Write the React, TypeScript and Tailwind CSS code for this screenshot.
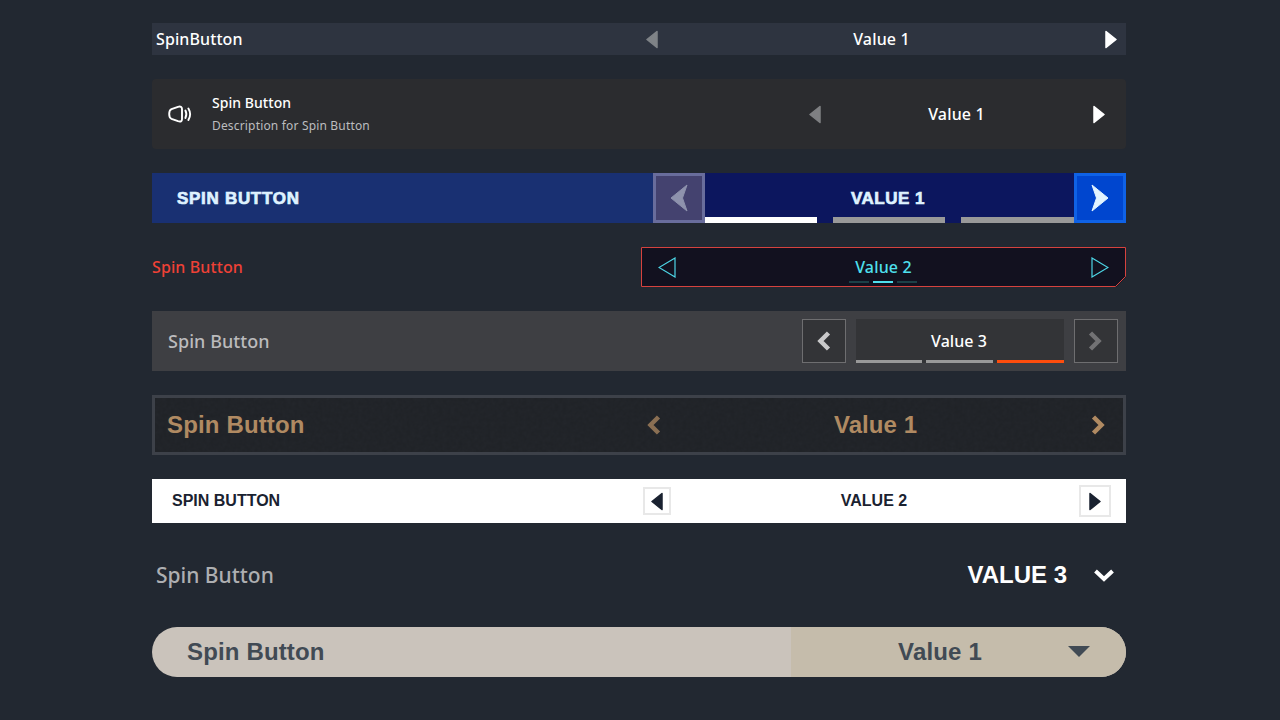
import React from "react";

const Tri = ({ dir, w, h, className }: { dir: "l" | "r"; w: number; h: number; className?: string }) => (
  <svg width={w} height={h} viewBox="0 0 12 18" className={className} aria-hidden>
    <polygon
      points={dir === "l" ? "11,1 1,9 11,17" : "1,1 11,9 1,17"}
      fill="currentColor"
      stroke="currentColor"
      strokeWidth="1.5"
      strokeLinejoin="round"
    />
  </svg>
);

const Chev = ({ dir, className }: { dir: "l" | "r"; className?: string }) => (
  <svg width="14" height="22" viewBox="0 0 14 22" className={className} aria-hidden>
    <polyline
      points={dir === "l" ? "11.5,3 3.5,11 11.5,19" : "2.5,3 10.5,11 2.5,19"}
      fill="none"
      stroke="currentColor"
      strokeWidth="4.5"
    />
  </svg>
);

const Dart = ({ dir }: { dir: "l" | "r" }) => (
  <svg width="18" height="28" viewBox="0 0 18 28" aria-hidden>
    <polygon
      points={dir === "l" ? "1,14 17,1 12.5,14 17,27" : "17,14 1,1 5.5,14 1,27"}
      fill="currentColor"
      stroke="currentColor"
      strokeWidth="1"
      strokeLinejoin="round"
    />
  </svg>
);

const Speaker = () => (
  <svg width="24" height="18" viewBox="168 105 24 18" fill="none" stroke="white" strokeWidth="1.9" strokeLinejoin="round" strokeLinecap="round" aria-hidden>
    <path d="M171.5 109.2 L178 106.8 Q182 105.8 182 109 L182 119 Q182 122.5 178 121.2 L171.5 118.8 Q169.2 117.8 169.2 114 Q169.2 110.2 171.5 109.2 Z" />
    <path d="M185.4 110.5 C186.6 112.8 186.6 115.7 185.4 118" />
    <path d="M188.4 108.5 C190.5 112 190.5 116.5 188.4 120" />
  </svg>
);

export default function App() {
  return (
    <div className="min-h-[720px] bg-[#222831] pt-[23px] [font-family:'Noto_Sans',sans-serif]">
      <div className="ml-[152px] flex w-[974px] flex-col gap-6">
        {/* 1 */}
        <div className="flex h-8 items-center justify-between bg-[#2e3440] pl-1 text-white">
          <span className="text-base font-medium tracking-[0.1px]">SpinButton</span>
          <div className="flex w-[490px] items-center justify-between pl-[10px] pr-[9px]">
            <Tri dir="l" w={12} h={19} className="text-[#7f8387]" />
            <span className="text-base font-medium tracking-[0.15px]">Value 1</span>
            <Tri dir="r" w={12} h={19} className="text-white" />
          </div>
        </div>

        {/* 2 */}
        <div className="flex h-[70px] items-center justify-between rounded bg-[#2b2c2f] pl-4 pr-[21px] text-white">
          <div className="flex items-center gap-5">
            <Speaker />
            <div className="mt-[-1px] flex flex-col gap-[4px]">
              <span className="text-sm leading-5 font-medium tracking-[0.05px]">Spin Button</span>
              <span className="text-xs leading-[18px] tracking-[0.17px] text-[#bcbdbf]">Description for Spin Button</span>
            </div>
          </div>
          <div className="flex w-[296px] items-center justify-between">
            <Tri dir="l" w={12} h={19} className="text-[#7f8083]" />
            <span className="mr-[1px] text-base font-medium tracking-[0.15px]">Value 1</span>
            <Tri dir="r" w={12} h={19} className="text-white" />
          </div>
        </div>

        {/* 3 */}
        <div className="flex h-[50px] items-stretch bg-[#193072] pl-[25px] font-['Liberation_Sans',sans-serif] text-[#dff2ff]">
          <span className="flex flex-1 items-center pt-[1px] text-[17px] font-bold tracking-[0.7px] [-webkit-text-stroke:0.7px_#dff2ff]">SPIN BUTTON</span>
          <button className="flex w-[52px] items-center justify-center border-[3px] border-[#696d9c] bg-[#44426f] text-[#8e92ad]">
            <Dart dir="l" />
          </button>
          <div className="relative flex w-[369px] items-center justify-center bg-[#0c165e] pr-[3px] pt-[1px] text-[17px] font-bold tracking-[0.5px] [-webkit-text-stroke:0.7px_#dff2ff]">
            VALUE 1
            <div className="absolute inset-x-0 bottom-0 flex justify-between">
              <span className="h-[6px] w-28 bg-white" />
              <span className="h-[6px] w-28 bg-[#999999]" />
              <span className="h-[6px] w-[113px] bg-[#999999]" />
            </div>
          </div>
          <button className="flex w-[52px] items-center justify-center border-[3px] border-[#0f62e6] bg-[#0046cf] text-[#e2f4ff]">
            <Dart dir="r" />
          </button>
        </div>

        {/* 4 */}
        <div className="flex h-10 items-center justify-between">
          <span className="text-base font-medium tracking-[0.1px] text-[#ef4136]">Spin Button</span>
          <div className="relative flex h-10 w-[485px] items-center justify-between bg-[#12111f] px-[17px] [clip-path:polygon(0_0,100%_0,100%_30px,475px_100%,0_100%)]">
            <svg width="485" height="40" className="absolute left-0 top-0" aria-hidden>
              <polygon points="0.5,0.5 484.5,0.5 484.5,29.5 474.5,39.5 0.5,39.5" fill="none" stroke="#d6423e" />
            </svg>
            <svg width="18" height="21" viewBox="0 0 18 21" className="text-[#4dd6e6]" aria-hidden>
              <polygon points="17,1 1,10.5 17,20" fill="none" stroke="currentColor" strokeWidth="1.2" />
            </svg>
            <span className="mb-[1px] text-base font-medium tracking-[0.15px] text-[#4fe0ee]">Value 2</span>
            <svg width="18" height="21" viewBox="0 0 18 21" className="text-[#4dd6e6]" aria-hidden>
              <polygon points="1,1 17,10.5 1,20" fill="none" stroke="currentColor" strokeWidth="1.2" />
            </svg>
            <div className="absolute bottom-[4px] left-[208px] flex gap-1">
              <span className="h-[2px] w-5 bg-[#1c4047]" />
              <span className="h-[2px] w-5 bg-[#4fe0ee]" />
              <span className="h-[2px] w-5 bg-[#1c4047]" />
            </div>
          </div>
        </div>

        {/* 5 */}
        <div className="flex h-[60px] items-center justify-between bg-[#3e3f43] pl-4 pr-2">
          <span className="text-lg font-medium tracking-[0.05px] text-[#bbbbbd]">Spin Button</span>
          <div className="flex items-center gap-[10px]">
            <button className="flex size-11 items-center justify-center border border-[#6e6e70] bg-[#333437] text-[#c9c9ca]">
              <Chev dir="l" />
            </button>
            <div className="relative flex h-11 w-52 items-center justify-center bg-[#333437] pr-[2px] text-base font-medium tracking-[0.05px] text-white">
              Value 3
              <div className="absolute inset-x-0 bottom-0 flex gap-1">
                <span className="h-[3px] w-[66px] bg-[#999999]" />
                <span className="h-[3px] w-[67px] bg-[#999999]" />
                <span className="h-[3px] w-[67px] bg-[#ff4d0d]" />
              </div>
            </div>
            <button className="flex size-11 items-center justify-center border border-[#6e6e70] bg-[#333437] pr-[2px] text-[#727274]">
              <Chev dir="r" />
            </button>
          </div>
        </div>

        {/* 6 */}
        <div className="relative flex h-[60px] items-center justify-between border-[3px] border-[#3d4149] bg-[#23262b] pl-3 pr-[18px] font-['Liberation_Sans',sans-serif] text-[#b08a62]">
          <svg className="absolute inset-0 size-full opacity-15" aria-hidden>
            <filter id="grain">
              <feTurbulence type="fractalNoise" baseFrequency="0.25" numOctaves="4" seed="4" />
              <feColorMatrix values="0 0 0 0 0  0 0 0 0 0  0 0 0 0 0  0.9 0 0 0 -0.15" />
            </filter>
            <rect width="100%" height="100%" filter="url(#grain)" />
          </svg>
          <span className="relative text-2xl font-bold tracking-[0.15px]">Spin Button</span>
          <div className="relative flex w-[458px] items-center justify-between">
            <Chev dir="l" className="text-[#8a6f53]" />
            <span className="mr-[1px] text-2xl font-bold tracking-[0.05px]">Value 1</span>
            <Chev dir="r" />
          </div>
        </div>

        {/* 7 */}
        <div className="flex h-11 items-center justify-between bg-white pl-5 pr-[15px] font-['Liberation_Sans',sans-serif] text-base font-bold text-[#1a2230]">
          <span>SPIN BUTTON</span>
          <div className="flex w-[468px] items-center justify-between">
            <button className="flex size-7 items-center justify-center border-2 border-[#e8e8e8]">
              <Tri dir="l" w={12} h={19} />
            </button>
            <span className="mr-[2px]">VALUE 2</span>
            <button className="flex size-8 items-center justify-center border-2 border-[#e8e8e8] pl-[1px]">
              <Tri dir="r" w={12} h={19} />
            </button>
          </div>
        </div>

        {/* 8 */}
        <div className="flex h-14 items-center justify-between pl-1 pr-3">
          <span className="pt-[1px] text-[21px] font-medium text-[#aeafb1]">Spin Button</span>
          <div className="flex items-center gap-[27px] font-['Liberation_Sans',sans-serif] text-2xl font-bold text-white">
            <span>VALUE 3</span>
            <svg width="20" height="13" viewBox="0 0 20 13" aria-hidden>
              <polyline points="1.5,2 10,10 18.5,2" fill="none" stroke="white" strokeWidth="4" />
            </svg>
          </div>
        </div>

        {/* 9 */}
        <div className="flex h-[50px] items-stretch overflow-hidden rounded-[25px] bg-[#cac3bb] font-['Liberation_Sans',sans-serif] text-[#414a54]">
          <span className="flex w-[639px] items-center pl-[35px] text-2xl font-bold tracking-[0.15px]">Spin Button</span>
          <div className="relative flex flex-1 items-center justify-center bg-[#c5bcab] pr-[37px] text-2xl font-bold tracking-[0.15px]">
            Value 1
            <svg width="22" height="11" viewBox="0 0 22 11" className="absolute right-[36px] top-[19px]" aria-hidden>
              <polygon points="0,0 22,0 11,11" fill="currentColor" />
            </svg>
          </div>
        </div>
      </div>
    </div>
  );
}
